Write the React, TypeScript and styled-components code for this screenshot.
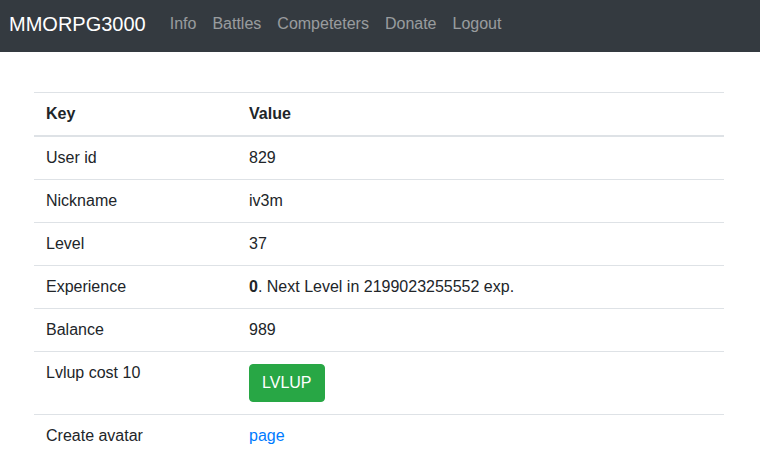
import React from "react";
import styled, { createGlobalStyle } from "styled-components";

const Global = createGlobalStyle`
  html, body { margin: 0; padding: 0; background: #fff; }
  body {
    font-family: "Liberation Sans", Arial, sans-serif;
    font-size: 16px;
    line-height: 1.15;
    color: #212529;
  }
`;

const Navbar = styled.nav`
  height: 52px;
  background: #343a40;
  display: flex;
  align-items: center;
  padding: 0 9px;
  box-sizing: border-box;
`;

const Brand = styled.a`
  font-size: 20px;
  color: #fff;
  text-decoration: none;
  margin-right: 16px;
  margin-top: -4px;
`;

const NavLinks = styled.div`
  display: flex;
  margin-top: -4px;
`;

const NavLink = styled.a`
  color: rgba(255, 255, 255, 0.5);
  text-decoration: none;
  padding: 0 8px;
  font-size: 16px;
`;

const Container = styled.main`
  padding: 40px 36px 0 34px;
`;

const Table = styled.table`
  width: 100%;
  border-collapse: collapse;
  line-height: 18px;
`;

const Th = styled.th<{ $w?: number }>`
  text-align: left;
  font-weight: bold;
  padding: 12px;
  border-top: 1px solid #dee2e6;
  border-bottom: 2px solid #dee2e6;
  vertical-align: bottom;
  width: ${(p) => (p.$w ? `${p.$w}px` : "auto")};
  box-sizing: border-box;
`;

const Td = styled.td`
  padding: 12px;
  border-top: 1px solid #dee2e6;
  vertical-align: top;
`;

const Button = styled.button`
  font-family: inherit;
  font-size: 16px;
  line-height: 24px;
  color: #fff;
  background: #28a745;
  border: 1px solid #28a745;
  border-radius: 4px;
  padding: 6px 12px;
  cursor: pointer;
  display: block;
`;

const Link = styled.a`
  color: #007bff;
  text-decoration: none;
`;

const rows: [string, React.ReactNode][] = [
  ["User id", "829"],
  ["Nickname", "iv3m"],
  ["Level", "37"],
  [
    "Experience",
    <>
      <b>0</b>. Next Level in 2199023255552 exp.
    </>,
  ],
  ["Balance", "989"],
  ["Lvlup cost 10", <Button>LVLUP</Button>],
  ["Create avatar", <Link href="#">page</Link>],
];

export default function App() {
  return (
    <>
      <Global />
      <Navbar>
        <Brand href="#">MMORPG3000</Brand>
        <NavLinks>
          {["Info", "Battles", "Competeters", "Donate", "Logout"].map((l) => (
            <NavLink key={l} href="#">
              {l}
            </NavLink>
          ))}
        </NavLinks>
      </Navbar>
      <Container>
        <Table>
          <thead>
            <tr>
              <Th $w={203}>Key</Th>
              <Th>Value</Th>
            </tr>
          </thead>
          <tbody>
            {rows.map(([k, v]) => (
              <tr key={k}>
                <Td>{k}</Td>
                <Td>{v}</Td>
              </tr>
            ))}
          </tbody>
        </Table>
      </Container>
    </>
  );
}
